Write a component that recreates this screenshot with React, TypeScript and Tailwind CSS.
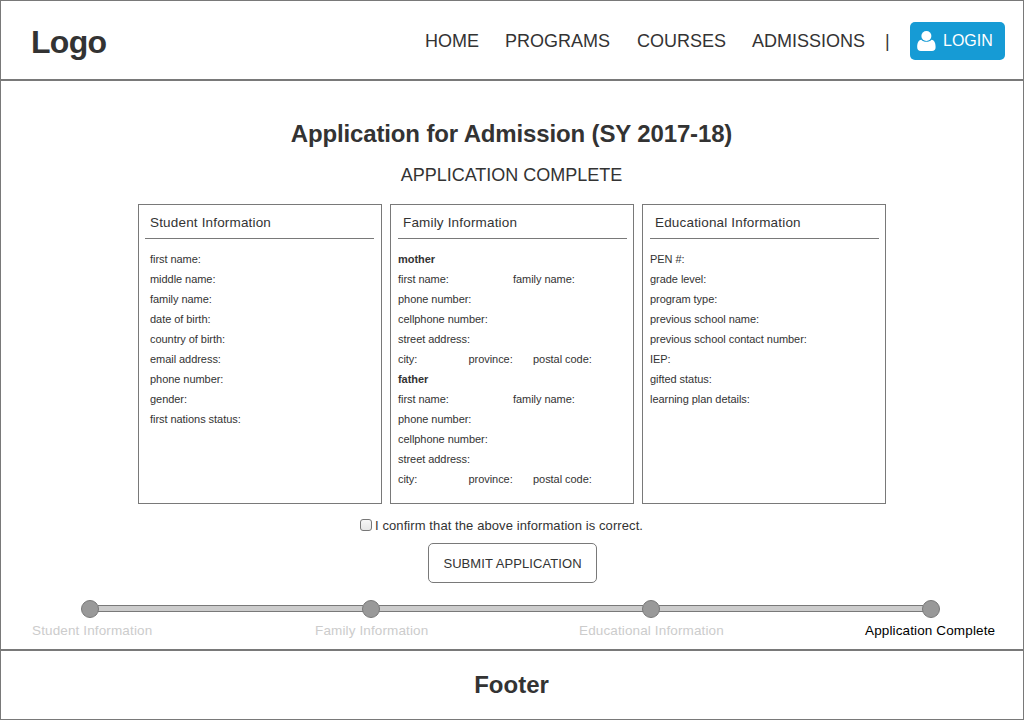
import React from "react";

type Row = { cells: { text: string; width?: string }[]; bold?: boolean };

const line = (text: string): Row => ({ cells: [{ text }] });

const studentRows: Row[] = [
  "first name:",
  "middle name:",
  "family name:",
  "date of birth:",
  "country of birth:",
  "email address:",
  "phone number:",
  "gender:",
  "first nations status:",
].map(line);

const parentRows = (who: string): Row[] => [
  { cells: [{ text: who }], bold: true },
  { cells: [{ text: "first name:", width: "w-[115px]" }, { text: "family name:" }] },
  line("phone number:"),
  line("cellphone number:"),
  line("street address:"),
  {
    cells: [
      { text: "city:", width: "w-[70.5px]" },
      { text: "province:", width: "w-[64.5px]" },
      { text: "postal code:" },
    ],
  },
];

const familyRows: Row[] = [...parentRows("mother"), ...parentRows("father")];

const educationRows: Row[] = [
  "PEN #:",
  "grade level:",
  "program type:",
  "previous school name:",
  "previous school contact number:",
  "IEP:",
  "gifted status:",
  "learning plan details:",
].map(line);

function Panel({ title, rows, pad, rowPad }: { title: string; rows: Row[]; pad: string; rowPad: string }) {
  return (
    <section className={`h-[300px] w-[244px] border border-[#797979] ${pad}`}>
      <h3 className="h-[34px] w-[229px] border-b border-[#797979] pt-px pl-[5px] text-[13.5px] leading-[34px] tracking-[0.17px]">
        {title}
      </h3>
      <div className={`pt-[10px] text-[11px] leading-5 tracking-[-0.05px] whitespace-nowrap ${rowPad}`}>
        {rows.map((row, i) => (
          <div key={i} className={row.bold ? "flex font-bold" : "flex"}>
            {row.cells.map((cell) => (
              <span key={cell.text} className={cell.width}>
                {cell.text}
              </span>
            ))}
          </div>
        ))}
      </div>
    </section>
  );
}

const steps = [
  { label: "Student Information", style: "w-[283px] text-[#cccccc]", track: "" },
  { label: "Family Information", style: "w-[264px] text-[#cccccc]", track: "w-[265px]" },
  { label: "Educational Information", style: "w-[286px] text-[#cccccc]", track: "w-[264px]" },
  { label: "Application Complete", style: "text-black", track: "w-[264px]" },
];

export default function App() {
  return (
    <div className="flex h-[720px] w-[1024px] flex-col border border-[#797979] bg-white font-['Liberation_Sans',Arial,sans-serif] text-[#333333]">
      <header className="flex h-[80px] shrink-0 items-center border-b-2 border-[#797979] pl-[30px]">
        <div className="w-[394px] pt-[4px] text-[32px] leading-9 font-bold tracking-[-0.7px]">Logo</div>
        <nav className="flex items-center pt-px text-[18px] leading-5">
          <a className="w-[80px]">HOME</a>
          <a className="w-[132px]">PROGRAMS</a>
          <a className="w-[115px]">COURSES</a>
          <a className="w-[133px]">ADMISSIONS</a>
          <span className="w-[25px]">|</span>
        </nav>
        <button className="mt-px flex h-[38px] w-[95px] items-center rounded-[5px] bg-[#169bd5] pl-[7px] text-[16px] text-white">
          <svg width="19" height="20" viewBox="0 0 19 20" className="mr-[7px]" fill="currentColor">
            <circle cx="9.4" cy="5" r="5" />
            <path d="M4.3 8.7C1.2 9 .2 12.3.2 16.2.2 18.7 1.6 20 3.8 20h11.2c2.2 0 3.6-1.3 3.6-3.8 0-3.9-1-7.2-4.1-7.5-1.2 1.3-3 2.1-5.1 2.1S5.500 10 4.300 8.700Z" />
          </svg>
          <span>LOGIN</span>
        </button>
      </header>

      <main className="flex h-[570px] shrink-0 flex-col border-b-2 border-[#797979]">
        <h1 className="mt-[39px] pr-px text-center text-[24px] leading-7 font-bold tracking-[-0.14px]">
          Application for Admission (SY 2017-18)
        </h1>
        <h2 className="mt-[17px] pr-px text-center text-[18px] leading-5">APPLICATION COMPLETE</h2>
        <div className="mt-[19px] flex justify-center gap-2">
          <Panel title="Student Information" rows={studentRows} pad="pl-[6px]" rowPad="pl-[5px]" />
          <Panel title="Family Information" rows={familyRows} pad="pl-[7px]" rowPad="" />
          <Panel title="Educational Information" rows={educationRows} pad="pl-[7px]" rowPad="" />
        </div>
        <label className="mt-[13px] ml-[359px] flex h-4 items-center gap-[3px] text-[13px] tracking-[0.09px]">
          <input
            type="checkbox"
            className="h-3 w-3 appearance-none rounded-[3px] border border-[#777777] bg-linear-to-b from-[#f6f6f6] to-[#e6e6e6]"
          />
          <span className="pt-[2px]">I confirm that the above information is correct.</span>
        </label>
        <button className="mt-[10px] ml-[427px] h-10 w-[169px] rounded-[5px] border border-[#797979] pt-[2px] text-[13px] tracking-[0.08px]">
          SUBMIT APPLICATION
        </button>
        <div className="mt-[17px] ml-[80px] flex items-center">
          {steps.map((step) => (
            <React.Fragment key={step.label}>
              {step.track && (
                <span className={`-mx-px -mt-px h-[7px] border-y border-[#797979] bg-[#cccccc] ${step.track}`} />
              )}
              <span className="z-10 h-[18px] w-[18px] rounded-full border border-[#797979] bg-[#999999]" />
            </React.Fragment>
          ))}
        </div>
        <div className="mt-[5px] flex pl-[31px] text-[13.5px] leading-4 tracking-[0.13px] whitespace-nowrap">
          {steps.map((step) => (
            <span key={step.label} className={step.style}>
              {step.label}
            </span>
          ))}
        </div>
      </main>

      <footer className="flex flex-1 items-center justify-center pr-px text-[24px] font-bold">Footer</footer>
    </div>
  );
}
